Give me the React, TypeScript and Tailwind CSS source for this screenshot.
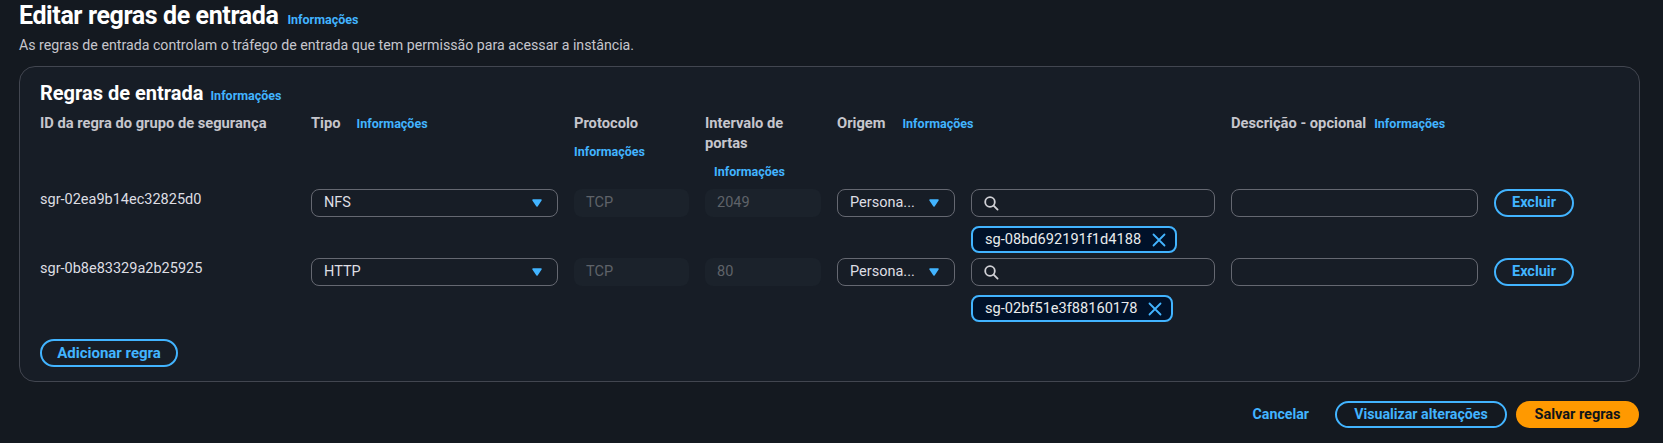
import React from "react";

const COLS = "grid grid-cols-[255px_247px_115px_116px_118px_244px_247px_80px] gap-x-4";

function Info({ className = "" }: { className?: string }) {
  return (
    <span className={"text-[12.5px] font-bold leading-[20px] text-[#42b4ff] " + className}>Informações</span>
  );
}

function Caret() {
  return (
    <svg width="10" height="8" viewBox="0 0 10 8" aria-hidden>
      <path d="M1 1 H9 L5 7 Z" fill="#42b4ff" stroke="#42b4ff" strokeWidth="1.5" strokeLinejoin="round" />
    </svg>
  );
}

function SearchIcon() {
  return (
    <svg width="15" height="15" viewBox="0 0 15 15" aria-hidden>
      <circle cx="6" cy="6" r="4.8" fill="none" stroke="#d1d1d6" strokeWidth="1.8" />
      <path d="M9.6 9.6 L13.6 13.6" stroke="#d1d1d6" strokeWidth="1.8" strokeLinecap="round" />
    </svg>
  );
}

function XIcon() {
  return (
    <svg width="14" height="14" viewBox="0 0 14 14" aria-hidden>
      <path d="M1.5 1.5 L12.5 12.5 M12.5 1.5 L1.5 12.5" stroke="#42b4ff" strokeWidth="1.8" strokeLinecap="round" />
    </svg>
  );
}

function Select({ value, className = "" }: { value: string; className?: string }) {
  return (
    <div
      className={
        "flex h-[28px] items-center justify-between rounded-[8px] border border-[#656871] pl-[12px] pr-[15px] text-[14.5px] text-[#dedee3] " +
        className
      }
    >
      <span>{value}</span>
      <Caret />
    </div>
  );
}

function Disabled({ value }: { value: string }) {
  return (
    <div className="flex h-[28px] items-center rounded-[8px] bg-[#1b222b] pl-[12px] text-[14.5px] text-[#5f6369]">{value}</div>
  );
}

function Row({ id, type, port, sg }: { id: string; type: string; port: string; sg: string }) {
  return (
    <div className={COLS + " items-start"}>
      <div className="pt-[3px] text-[14.5px] leading-[16px] text-[#dedee3]">{id}</div>
      <Select value={type} />
      <Disabled value="TCP" />
      <Disabled value={port} />
      <Select value="Persona..." />
      <div className="flex flex-col items-start">
        <div className="flex h-[28px] w-full items-center rounded-[8px] border border-[#656871] pl-[12px]">
          <SearchIcon />
        </div>
        <div className="mt-[9px] flex h-[27px] items-center gap-[11px] rounded-[8px] border-2 border-[#42b4ff] bg-[#001129] pl-[12px] pr-[9px] text-[14.6px] text-[#e9ebed]">
          <span>{sg}</span>
          <XIcon />
        </div>
      </div>
      <div className="h-[28px] rounded-[8px] border border-[#656871]" />
      <button className="flex h-[28px] w-[80px] items-center justify-center rounded-full border-2 border-[#42b4ff] text-[14.5px] font-bold text-[#42b4ff]">
        Excluir
      </button>
    </div>
  );
}

export default function App() {
  return (
    <div className="min-h-[443px] bg-[#141920] pl-[19px] pr-[23px] font-['Roboto','Liberation_Sans',sans-serif] text-[#dedee3]">
      <div className="flex items-baseline">
        <h1 className="text-[25px] font-bold leading-[32px] tracking-[-0.4px] text-white">Editar regras de entrada</h1>
        <Info className="ml-[9px]" />
      </div>
      <p className="mt-[2px] text-[14.2px] leading-[22px] text-[#c6c6cd]">
        As regras de entrada controlam o tráfego de entrada que tem permissão para acessar a instância.
      </p>

      <div className="mt-[10px] rounded-[16px] border border-[#424650] bg-[#171d26] px-[20px] pb-[14px] pt-[12px]">
        <div className="flex items-baseline">
          <h2 className="text-[20px] font-bold leading-[28px] text-white">Regras de entrada</h2>
          <Info className="ml-[7px]" />
        </div>

        <div className={COLS + " mt-[6px] items-start text-[14.7px] font-bold leading-[20px] text-[#c6c6cd]"}>
          <div>ID da regra do grupo de segurança</div>
          <div className="flex items-baseline">
            <span>Tipo</span>
            <Info className="ml-[16px]" />
          </div>
          <div className="flex flex-col">
            <span>Protocolo</span>
            <Info className="mt-[9px]" />
          </div>
          <div className="flex flex-col">
            <span>
              Intervalo de
              <br />
              portas
            </span>
            <Info className="ml-[9px] mt-[9px]" />
          </div>
          <div className="col-span-2 flex items-baseline">
            <span>Origem</span>
            <Info className="ml-[17px]" />
          </div>
          <div className="flex items-baseline">
            <span>Descrição - opcional</span>
            <Info className="ml-[8px]" />
          </div>
          <div />
        </div>

        <div className="mt-[7px] flex flex-col gap-[5px]">
          <Row id="sgr-02ea9b14ec32825d0" type="NFS" port="2049" sg="sg-08bd692191f1d4188" />
          <Row id="sgr-0b8e83329a2b25925" type="HTTP" port="80" sg="sg-02bf51e3f88160178" />
        </div>

        <button className="mt-[17px] flex h-[28px] w-[138px] items-center justify-center rounded-full border-2 border-[#42b4ff] text-[15px] font-bold text-[#42b4ff]">
          Adicionar regra
        </button>
      </div>

      <div className="mt-[19px] flex items-center justify-end">
        <button className="px-[18px] text-[14.2px] font-bold leading-[27px] text-[#42b4ff]">Cancelar</button>
        <button className="ml-[8px] flex h-[27px] w-[172px] items-center justify-center rounded-full border-2 border-[#42b4ff] text-[14.2px] font-bold text-[#42b4ff]">
          Visualizar alterações
        </button>
        <button className="ml-[9px] mr-[1px] flex h-[27px] w-[123px] items-center justify-center rounded-full bg-[#ff9900] text-[14.5px] font-bold text-[#0f141a]">
          Salvar regras
        </button>
      </div>
    </div>
  );
}
